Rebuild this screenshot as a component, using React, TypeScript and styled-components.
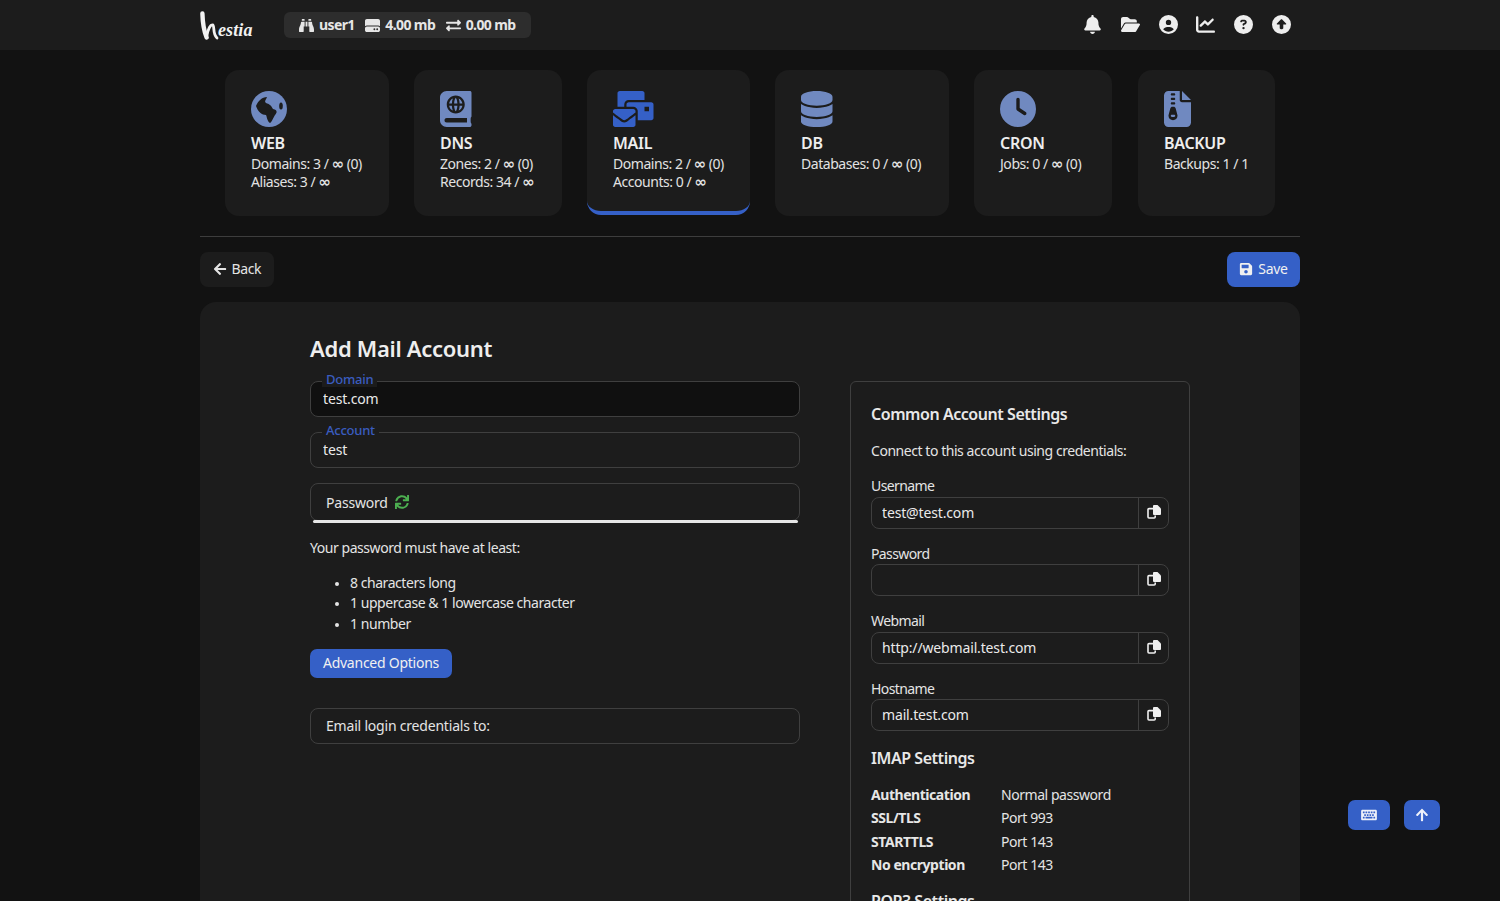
import React from "react";
import styled, { createGlobalStyle } from "styled-components";
import { FaAtlas, FaMailBulk, FaBinoculars, FaExchangeAlt, FaSave, FaArrowLeft, FaSync, FaKeyboard, FaArrowUp } from "react-icons/fa";
import {
  FaDatabase, FaClock, FaFileZipper, FaBell, FaFolderOpen, FaCircleUser,
  FaChartLine, FaCircleQuestion, FaCircleUp, FaHardDrive,
} from "react-icons/fa6";

const FONT = `"Noto Sans", "Open Sans", sans-serif`;

const Global = createGlobalStyle`
  html, body { margin: 0; height: 901px; overflow: hidden; background: #121212; }
  body { font-family: ${FONT}; font-size: 14px; color: #e4e4e4; letter-spacing: -0.45px; }
  * { box-sizing: border-box; }
`;

const TopBar = styled.header`
  height: 50px;
  background: #1c1c1c;
  display: flex;
  justify-content: center;
`;
const TopInner = styled.div`
  width: 1100px;
  display: flex;
  align-items: center;
`;
const Logo = styled.div`
  width: 54px;
  height: 30px;
  margin-right: 30px;
  display: flex;
  align-items: flex-end;
  color: #f2f2f2;
  svg { width: 19px; height: 29px; flex: none; }
`;
const LogoText = styled.span`
  font-family: "Liberation Serif", serif;
  font-style: italic;
  font-weight: 700;
  font-size: 18px;
  line-height: 20px;
  letter-spacing: 0.1px;
  margin-left: -1px;
`;
const Pill = styled.div`
  width: 247px;
  height: 26px;
  border-radius: 6px;
  background: #2d2d2d;
  display: flex;
  align-items: center;
  padding: 0 0 2px 15px;
  font-weight: 700;
  font-size: 14px;
  letter-spacing: -0.6px;
  color: #e6e6e6;
`;
const PillItem = styled.span`
  display: flex;
  align-items: center;
  gap: 5px;
  margin-right: 10.5px;
  svg { height: 15px; width: 15px; margin-top: 2px; }
`;
const TopIcons = styled.nav`
  margin: 0 9px 2px auto;
  display: flex;
  align-items: center;
  gap: 18.8px;
  color: #eeeeee;
  svg { height: 19px; width: 19px; display: block; }
`;

const Cards = styled.section`
  padding: 20px 25px;
  display: flex;
  gap: 25px;
  width: 1100px;
  margin: 0 auto;
`;
const Card = styled.a<{ $w: number; $active?: boolean; $last?: boolean }>`
  width: ${(p) => p.$w}px;
  height: 146px;
  padding: 21px 0 0 26px;
  background: #1c1c1c;
  border-radius: 14px;
  overflow: hidden;
  color: #e2e2e2;
  display: block;
  ${(p) => p.$last && `margin-left: auto;`}
  ${(p) => p.$active && `border-bottom: 4px solid #3560c7; height: 145px;`}
`;
const CardIcon = styled.div<{ $active?: boolean }>`
  height: 36px;
  color: ${(p) => (p.$active ? "#3560c7" : "#7089c0")};
  svg { height: 36px; width: 48px; display: block; }
`;
const CardTitle = styled.div`
  margin: 6px 0 2px;
  font-size: 16px;
  line-height: 20px;
  font-weight: 600;
  color: #eeeeee;
  letter-spacing: -0.3px;
`;
const CardLine = styled.div`
  font-size: 14px;
  line-height: 18px;
  white-space: nowrap;
`;
const Inf = styled.span`
  font-family: "DejaVu Sans", sans-serif;
  font-size: 15px;
  font-weight: 700;
  line-height: 0;
  letter-spacing: -0.6px;
`;

const Main = styled.main`
  width: 1100px;
  margin: 0 auto;
`;
const Divider = styled.hr`
  margin: 0;
  border: 0;
  border-top: 1px solid #3d3d3d;
`;
const Toolbar = styled.div`
  display: flex;
  justify-content: space-between;
  padding: 15px 0;
`;
const Button = styled.button<{ $primary?: boolean }>`
  height: 35px;
  padding: 0 12.5px 2px;
  border: 0;
  border-radius: 8px;
  display: flex;
  align-items: center;
  gap: 5px;
  font: inherit;
  letter-spacing: -0.35px;
  color: ${(p) => (p.$primary ? "#f0f0f0" : "#e4e4e4")};
  background: ${(p) => (p.$primary ? "#3560c7" : "#1c1c1c")};
  svg { height: 14px; width: 14px; }
`;

const Panel = styled.section`
  background: #1c1c1c;
  border-radius: 16px 16px 0 0;
  padding: 30px 110px 0;
  display: flex;
  gap: 50px;
  height: 700px;
`;
const LeftCol = styled.div`
  width: 490px;
  flex: none;
`;
const Title = styled.h1`
  margin: 0 0 17px;
  font-size: 22px;
  line-height: 32px;
  font-weight: 600;
  color: #eeeeee;
  letter-spacing: -0.3px;
`;
const FloatField = styled.div<{ $tall?: boolean; $gap?: number }>`
  position: relative;
  height: ${(p) => (p.$tall ? 38 : 36)}px;
  margin-bottom: ${(p) => p.$gap ?? 15}px;
  display: flex;
  align-items: center;
`;
const FloatInput = styled.input<{ $disabled?: boolean }>`
  width: 100%;
  height: 100%;
  padding: 0 12px 2px;
  border: 1px solid #3f3f3f;
  border-radius: 8px;
  background: ${(p) => (p.$disabled ? "#101010" : "#1c1c1c")};
  color: #eaeaea;
  font: inherit;
  letter-spacing: -0.15px;
  outline: 0;
`;
const FloatLabel = styled.label`
  position: absolute;
  left: 12px;
  top: -10px;
  padding: 0 4px;
  font-size: 13px;
  font-weight: 500;
  line-height: 16px;
  color: #3a5cc0;
  background: #1c1c1c;
  letter-spacing: -0.25px;
`;
const PlainField = styled.div`
  width: 100%;
  height: 100%;
  padding: 0 15px;
  display: flex;
  align-items: center;
  gap: 7px;
  border: 1px solid #3f3f3f;
  border-radius: 8px;
  color: #e4e4e4;
  letter-spacing: -0.2px;
  svg { color: #4caf50; height: 14px; width: 14px; }
`;
const Meter = styled.div`
  position: absolute;
  left: 3px;
  right: 2px;
  bottom: -2px;
  height: 3px;
  border-radius: 2px;
  background: #e6e6e6;
`;
const Para = styled.p`
  margin: 0;
  line-height: 20px;
  color: #e4e4e4;
`;
const List = styled.ul`
  margin: 15px 0 15.1px;
  padding-left: 40px;
  li { line-height: 20.3px; }
  li::marker { font-size: 11px; }
`;
const SmallButton = styled.button`
  height: 29px;
  width: 142px;
  border: 0;
  border-radius: 7px;
  background: #3560c7;
  color: #f0f0f0;
  font: inherit;
  letter-spacing: -0.25px;
  display: block;
  margin-bottom: 30px;
  padding: 0 0 2px;
`;

const SideCard = styled.aside`
  margin-top: 49px;
  width: 340px;
  height: 700px;
  border: 1px solid #3f3f3f;
  border-radius: 6px;
  padding: 20px 20px 0;
`;
const SideTitle = styled.h2<{ $mt?: number }>`
  margin: ${(p) => p.$mt ?? 0}px 0 0;
  font-size: 16px;
  line-height: 24px;
  font-weight: 600;
  color: #e8e8e8;
`;
const Lead = styled.p`
  margin: 15px 0 15px;
  line-height: 20px;
`;
const CopyGroup = styled.div`
  margin-bottom: 14.4px;
`;
const CopyLabel = styled.label`
  display: block;
  line-height: 20px;
  padding-top: 0.4px;
  margin-bottom: 0.6px;
  letter-spacing: -0.6px;
`;
const CopyRow = styled.div`
  display: flex;
  height: 32px;
  border: 1px solid #3f3f3f;
  border-radius: 8px;
  overflow: hidden;
`;
const CopyInput = styled.input`
  flex: 1;
  min-width: 0;
  padding: 0 10px 1px;
  border: 0;
  background: transparent;
  color: #eaeaea;
  font: inherit;
  letter-spacing: -0.15px;
  outline: 0;
`;
const CopyButton = styled.button`
  width: 30px;
  flex: none;
  border: 0;
  border-left: 1px solid #3f3f3f;
  background: transparent;
  color: #f0f0f0;
  padding: 0 0 2px;
  display: flex;
  align-items: center;
  justify-content: center;
  svg { height: 14px; width: 14px; }
`;
const SpecGrid = styled.dl`
  margin: 13.4px 0 0;
  display: grid;
  grid-template-columns: 130px 1fr;
  grid-auto-rows: 23.4px;
  align-items: center;
  dt { font-weight: 700; font-size: 14px; color: #e6e6e6; }
  dd { margin: 0; }
`;
const Floating = styled.div`
  position: fixed;
  right: 60px;
  top: 800px;
  display: flex;
  gap: 14px;
`;
const FloatBtn = styled.button<{ $w: number }>`
  width: ${(p) => p.$w}px;
  height: 30px;
  border: 0;
  border-radius: 7px;
  background: #3560c7;
  color: #eef1fa;
  display: flex;
  align-items: center;
  justify-content: center;
  padding: 0;
  svg { height: 14px; width: 16px; }
`;

const LEFT = "xMinYMid meet";

function GlobeIcon() {
  return (
    <svg viewBox="0 0 48 36" preserveAspectRatio={LEFT}>
      <circle cx="18" cy="18" r="18" fill="currentColor" />
      <path
        d="M5 15 C7 10 11 6 16 6 C15 9 13 10 15 12 C18 13 20 14 22 18 C27 19 26 22 24 24 C22 27 21 31 19 32 C16 30 16 26 15 24 C11 24 7 21 5 15Z"
        fill="#1c1c1c"
      />
      <ellipse cx="30" cy="15" rx="1.8" ry="3.5" fill="#1c1c1c" />
    </svg>
  );
}

const cards = [
  { w: 164, icon: <GlobeIcon />, title: "WEB", lines: ["Domains: 3 / ∞ (0)", "Aliases: 3 / ∞"] },
  { w: 148, icon: <FaAtlas preserveAspectRatio={LEFT} />, title: "DNS", lines: ["Zones: 2 / ∞ (0)", "Records: 34 / ∞"] },
  { w: 163, icon: <FaMailBulk preserveAspectRatio={LEFT} />, title: "MAIL", lines: ["Domains: 2 / ∞ (0)", "Accounts: 0 / ∞"], active: true },
  { w: 174, icon: <FaDatabase preserveAspectRatio={LEFT} />, title: "DB", lines: ["Databases: 0 / ∞ (0)"] },
  { w: 138, icon: <FaClock preserveAspectRatio={LEFT} />, title: "CRON", lines: ["Jobs: 0 / ∞ (0)"] },
  { w: 137, icon: <FaFileZipper preserveAspectRatio={LEFT} />, title: "BACKUP", lines: ["Backups: 1 / 1"], last: true },
];

const copyFields = [
  { label: "Username", value: "test@test.com" },
  { label: "Password", value: "" },
  { label: "Webmail", value: "http://webmail.test.com" },
  { label: "Hostname", value: "mail.test.com" },
];

const specs = [
  ["Authentication", "Normal password"],
  ["SSL/TLS", "Port 993"],
  ["STARTTLS", "Port 143"],
  ["No encryption", "Port 143"],
];

function withInfinity(line: string) {
  const parts = line.split("∞");
  if (parts.length === 1) return line;
  return (
    <>
      {parts[0]}
      <Inf>∞</Inf>
      {parts[1]}
    </>
  );
}

function CopyIcon() {
  return (
    <svg viewBox="0 0 14 14">
      <path d="M6 3.6H2a1 1 0 0 0-1 1V12a1 1 0 0 0 1 1h5.2a1 1 0 0 0 1-1v-1.6" fill="none" stroke="currentColor" strokeWidth="1.6" />
      <path d="M6 1a1 1 0 0 1 1-1h3.5L14 3.5V9a1 1 0 0 1-1 1H7a1 1 0 0 1-1-1z" fill="currentColor" />
    </svg>
  );
}

export default function App() {
  return (
    <>
      <Global />
      <TopBar>
        <TopInner>
          <Logo>
            <svg viewBox="0 0 19 29" fill="none" stroke="currentColor" strokeLinecap="round">
              <path d="M2.4 2.5 C2.6 10 3.2 18 6.6 26.5" strokeWidth="4.4" />
              <path d="M6.8 25 C8 18 10.5 13 13 14 C14.6 16 12.6 23 17 27" strokeWidth="2.8" />
            </svg>
            <LogoText>estia</LogoText>
          </Logo>
          <Pill>
            <PillItem><FaBinoculars />user1</PillItem>
            <PillItem><FaHardDrive />4.00 mb</PillItem>
            <PillItem><FaExchangeAlt />0.00 mb</PillItem>
          </Pill>
          <TopIcons>
            <FaBell />
            <FaFolderOpen />
            <FaCircleUser />
            <FaChartLine />
            <FaCircleQuestion />
            <FaCircleUp />
          </TopIcons>
        </TopInner>
      </TopBar>

      <Cards>
        {cards.map((c) => (
          <Card key={c.title} $w={c.w} $active={c.active} $last={c.last}>
            <CardIcon $active={c.active}>{c.icon}</CardIcon>
            <CardTitle>{c.title}</CardTitle>
            {c.lines.map((l) => (
              <CardLine key={l}>{withInfinity(l)}</CardLine>
            ))}
          </Card>
        ))}
      </Cards>

      <Main>
        <Divider />
        <Toolbar>
          <Button><FaArrowLeft />Back</Button>
          <Button $primary><FaSave />Save</Button>
        </Toolbar>
        <Panel>
          <LeftCol>
            <Title>Add Mail Account</Title>
            <FloatField>
              <FloatLabel>Domain</FloatLabel>
              <FloatInput $disabled readOnly value="test.com" />
            </FloatField>
            <FloatField>
              <FloatLabel>Account</FloatLabel>
              <FloatInput readOnly value="test" />
            </FloatField>
            <FloatField $tall $gap={17}>
              <PlainField>Password <FaSync /></PlainField>
              <Meter />
            </FloatField>
            <Para>Your password must have at least:</Para>
            <List>
              <li>8 characters long</li>
              <li>1 uppercase &amp; 1 lowercase character</li>
              <li>1 number</li>
            </List>
            <SmallButton>Advanced Options</SmallButton>
            <FloatField>
              <PlainField>Email login credentials to:</PlainField>
            </FloatField>
          </LeftCol>
          <SideCard>
            <SideTitle>Common Account Settings</SideTitle>
            <Lead>Connect to this account using credentials:</Lead>
            {copyFields.map((f) => (
              <CopyGroup key={f.label}>
                <CopyLabel>{f.label}</CopyLabel>
                <CopyRow>
                  <CopyInput readOnly value={f.value} />
                  <CopyButton><CopyIcon /></CopyButton>
                </CopyRow>
              </CopyGroup>
            ))}
            <SideTitle>IMAP Settings</SideTitle>
            <SpecGrid>
              {specs.map(([k, v]) => (
                <React.Fragment key={k}>
                  <dt>{k}</dt>
                  <dd>{v}</dd>
                </React.Fragment>
              ))}
            </SpecGrid>
            <SideTitle $mt={13}>POP3 Settings</SideTitle>
          </SideCard>
        </Panel>
      </Main>

      <Floating>
        <FloatBtn $w={42}><FaKeyboard /></FloatBtn>
        <FloatBtn $w={36}><FaArrowUp /></FloatBtn>
      </Floating>
    </>
  );
}
